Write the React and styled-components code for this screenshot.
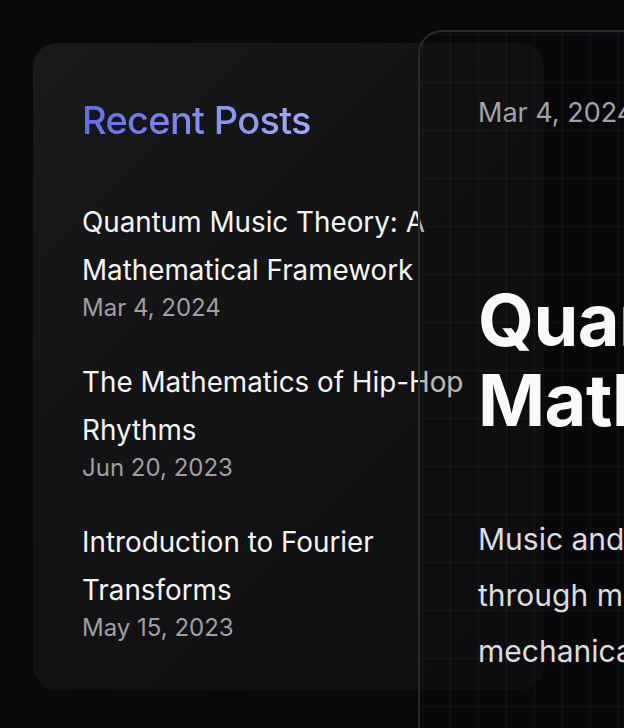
import React from "react";
import styled, { createGlobalStyle } from "styled-components";

const Global = createGlobalStyle`
  html, body {
    margin: 0;
    padding: 0;
    background: #09090b;
    overflow: hidden;
    font-family: Inter, "Noto Sans", sans-serif;
    -webkit-font-smoothing: antialiased;
  }
  * { box-sizing: border-box; }
`;

const Page = styled.div`
  width: 624px;
  height: 728px;
  overflow: hidden;
  padding: 30px 0 0 33px;
  display: grid;
  grid-template-columns: 385px 126px 1100px;
  grid-template-rows: auto;
  align-items: start;
`;

const Sidebar = styled.aside`
  grid-column: 1 / 3;
  grid-row: 1;
  margin-top: 13px;
  height: 647px;
  border-radius: 24px;
  background: linear-gradient(135deg, #19191b 0%, #121214 55%, #0f0f11 100%);
  padding: 57px 48px 48px 49px;
  display: flex;
  flex-direction: column;
`;

const Heading = styled.h2`
  margin: 0 0 58px;
  font-size: 38px;
  line-height: 40px;
  font-weight: 500;
  letter-spacing: -0.7px;
  background: linear-gradient(90deg, #5f6fe9 0%, #a1abf4 100%);
  -webkit-background-clip: text;
  background-clip: text;
  color: transparent;
  width: max-content;
`;

const PostList = styled.ul`
  list-style: none;
  margin: 0;
  padding: 0;
  display: flex;
  flex-direction: column;
  gap: 36px;
`;

const PostItem = styled.li`
  display: flex;
  flex-direction: column;
`;

const PostTitle = styled.a`
  color: #f4f4f5;
  font-size: 27.8px;
  line-height: 48px;
  font-weight: 400;
  text-decoration: none;
  white-space: nowrap;
`;

const PostDate = styled.time`
  color: #9f9fa6;
  font-size: 24px;
  line-height: 28px;
`;

const Article = styled.article`
  grid-column: 2 / 4;
  grid-row: 1;
  position: relative;
  min-height: 760px;
  border: 2px solid #29292c;
  border-right: none;
  border-bottom: none;
  border-radius: 24px 0 0 0;
  background: rgba(9, 9, 11, 0.25);
  padding: 66px 40px 0 58px;
  display: flex;
  flex-direction: column;

  &::before {
    content: "";
    position: absolute;
    inset: 0;
    border-radius: 22px 0 0 0;
    background-image:
      linear-gradient(to right, rgba(255,255,255,0.045) 1px, transparent 1px),
      linear-gradient(to bottom, rgba(255,255,255,0.045) 1px, transparent 1px);
    background-size: 28px 48px;
    background-position: 2px 2px;
    pointer-events: none;
    z-index: 1;
  }

  &::after {
    content: "";
    position: absolute;
    top: 0;
    left: 140px;
    width: 600px;
    height: 1px;
    background: linear-gradient(90deg, transparent, rgba(99,102,241,0.35), transparent);
    pointer-events: none;
  }
`;

const ArticleDate = styled.time`
  color: #a1a1aa;
  font-size: 27px;
  line-height: 30px;
`;

const ArticleTitle = styled.h1`
  margin: 152px 0 0;
  color: #fafafa;
  font-size: 72px;
  line-height: 80px;
  font-weight: 700;
  letter-spacing: -0.5px;
  white-space: nowrap;
`;

const Body = styled.p`
  margin: 71px 0 0;
  color: #dcdce0;
  font-size: 30px;
  line-height: 56px;
  font-weight: 400;
  white-space: nowrap;
`;

const posts = [
  { title: ["Quantum Music Theory: A", "Mathematical Framework"], date: "Mar 4, 2024" },
  { title: ["The Mathematics of Hip-Hop", "Rhythms"], date: "Jun 20, 2023" },
  { title: ["Introduction to Fourier", "Transforms"], date: "May 15, 2023" },
];

export default function App() {
  return (
    <>
      <Global />
      <Page>
        <Sidebar>
          <Heading>Recent Posts</Heading>
          <PostList>
            {posts.map((p) => (
              <PostItem key={p.date}>
                <PostTitle href="#">
                  {p.title[0]}
                  <br />
                  {p.title[1]}
                </PostTitle>
                <PostDate>{p.date}</PostDate>
              </PostItem>
            ))}
          </PostList>
        </Sidebar>
        <Article>
          <ArticleDate>Mar 4, 2024</ArticleDate>
          <ArticleTitle>
            Quantum Music Theory: A
            <br />
            Mathematical Framework
          </ArticleTitle>
          <Body>
            Music and mathematics have always shared a deep connection,
            <br />
            through mathematical structures that describe harmony and rhythm,
            <br />
            mechanical resonance, and the physics of vibrating strings.
          </Body>
        </Article>
      </Page>
    </>
  );
}
